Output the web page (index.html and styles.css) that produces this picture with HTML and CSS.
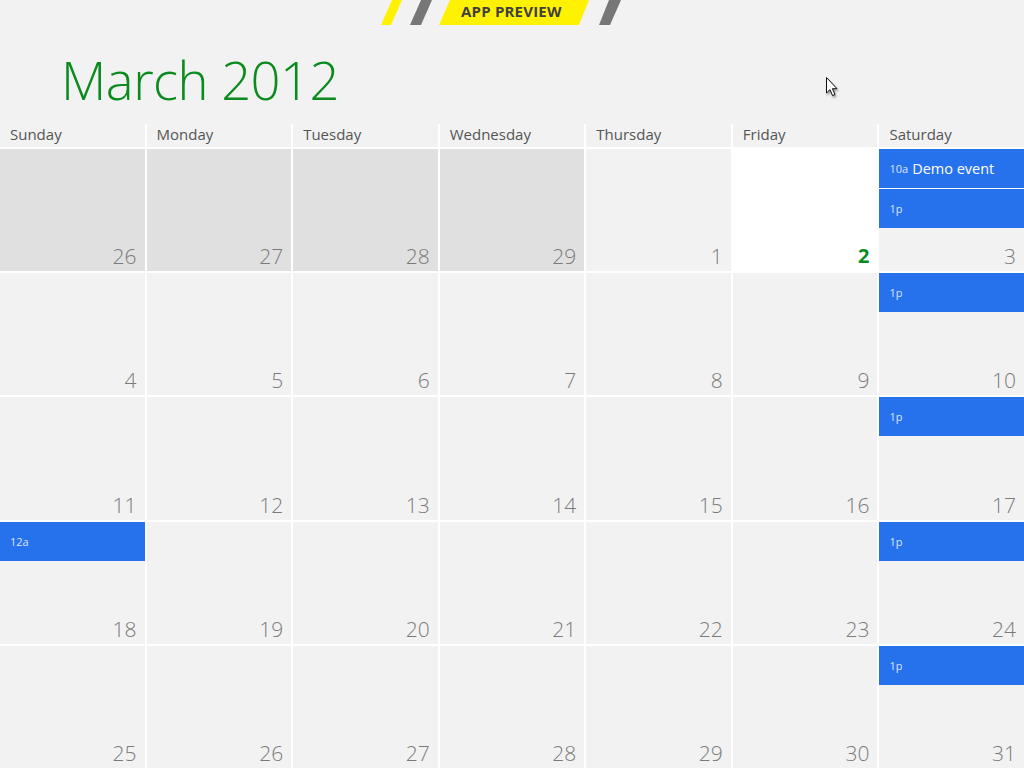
FILE: index.html
```html
<!DOCTYPE html>
<html>
<head>
<meta charset="utf-8">
<link rel="stylesheet" href="styles.css">
</head>
<body>
<header class="top">
  <div class="banner">
    <svg class="banner-shapes" width="260" height="25" viewBox="0 0 260 25">
      <polygon points="1,25 12,0 22,0 11,25" fill="#fff200"/>
      <polygon points="30,25 41,0 52,0 41,25" fill="#777777"/>
      <polygon points="59,25 70,0 209,0 199,25" fill="#fff200"/>
      <polygon points="219,25 229,0 241,0 230,25" fill="#777777"/>
    </svg>
    <span class="banner-text">APP PREVIEW</span>
  </div>
  <h1 class="title">March 2012</h1>
  <svg class="cursor" width="14" height="22" viewBox="0 0 14 22">
    <path d="M1.5,1.5 L1.5,17 L5,13.6 L7.6,19.6 L10,18.6 L7.4,12.7 L12,12.7 Z" fill="#fff" stroke="#111" stroke-width="1" stroke-linejoin="round"/>
  </svg>
</header>
<main class="calendar">
  <div class="dayname">Sunday</div>
  <div class="dayname">Monday</div>
  <div class="dayname">Tuesday</div>
  <div class="dayname">Wednesday</div>
  <div class="dayname">Thursday</div>
  <div class="dayname">Friday</div>
  <div class="dayname">Saturday</div>

  <div class="cell other"><span class="num">26</span></div>
  <div class="cell other"><span class="num">27</span></div>
  <div class="cell other"><span class="num">28</span></div>
  <div class="cell other"><span class="num">29</span></div>
  <div class="cell"><span class="num">1</span></div>
  <div class="cell today"><span class="num">2</span></div>
  <div class="cell">
    <div class="event"><span class="time">10a</span> <span class="name">Demo event</span></div>
    <div class="event"><span class="time small">1p</span></div>
    <span class="num">3</span>
  </div>

  <div class="cell"><span class="num">4</span></div>
  <div class="cell"><span class="num">5</span></div>
  <div class="cell"><span class="num">6</span></div>
  <div class="cell"><span class="num">7</span></div>
  <div class="cell"><span class="num">8</span></div>
  <div class="cell"><span class="num">9</span></div>
  <div class="cell">
    <div class="event"><span class="time small">1p</span></div>
    <span class="num">10</span>
  </div>

  <div class="cell"><span class="num">11</span></div>
  <div class="cell"><span class="num">12</span></div>
  <div class="cell"><span class="num">13</span></div>
  <div class="cell"><span class="num">14</span></div>
  <div class="cell"><span class="num">15</span></div>
  <div class="cell"><span class="num">16</span></div>
  <div class="cell">
    <div class="event"><span class="time small">1p</span></div>
    <span class="num">17</span>
  </div>

  <div class="cell">
    <div class="event"><span class="time small">12a</span></div>
    <span class="num">18</span>
  </div>
  <div class="cell"><span class="num">19</span></div>
  <div class="cell"><span class="num">20</span></div>
  <div class="cell"><span class="num">21</span></div>
  <div class="cell"><span class="num">22</span></div>
  <div class="cell"><span class="num">23</span></div>
  <div class="cell">
    <div class="event"><span class="time small">1p</span></div>
    <span class="num">24</span>
  </div>

  <div class="cell"><span class="num">25</span></div>
  <div class="cell"><span class="num">26</span></div>
  <div class="cell"><span class="num">27</span></div>
  <div class="cell"><span class="num">28</span></div>
  <div class="cell"><span class="num">29</span></div>
  <div class="cell"><span class="num">30</span></div>
  <div class="cell">
    <div class="event"><span class="time small">1p</span></div>
    <span class="num">31</span>
  </div>
</main>
</body>
</html>
```
FILE: styles.css
```css
html, body {
  margin: 0;
  padding: 0;
}
body {
  width: 1024px;
  height: 768px;
  overflow: hidden;
  background: #f2f2f2;
  font-family: "Open Sans", "Noto Sans", sans-serif;
  display: flex;
  flex-direction: column;
}
.top {
  position: relative;
  height: 124px;
  flex: none;
}
.banner {
  position: absolute;
  left: 380px;
  top: 0;
  width: 260px;
  height: 25px;
}
.banner-shapes {
  position: absolute;
  left: 0;
  top: 0;
}
.banner-text {
  position: absolute;
  left: 81px;
  top: -1px;
  line-height: 25px;
  font-size: 15px;
  font-weight: 700;
  color: #3f3f3f;
  letter-spacing: 0.2px;
}
.title {
  margin: 0;
  padding: 45px 0 0 61px;
  font-size: 52.5px;
  font-weight: 300;
  line-height: 70px;
  color: #0b8a1e;
  letter-spacing: -0.5px;
}
.cursor {
  position: absolute;
  left: 825px;
  top: 76px;
  filter: drop-shadow(1px 2px 1px rgba(0,0,0,0.35));
}
.calendar {
  flex: 1;
  background: #ffffff;
  display: grid;
  grid-template-columns: repeat(7, 1fr);
  grid-template-rows: 23px repeat(5, 1fr);
  gap: 2px;
}
.dayname {
  background: #f2f2f2;
  padding-left: 10px;
  font-size: 15px;
  line-height: 21px;
  color: #555555;
}
.cell {
  background: #f2f2f2;
  display: flex;
  flex-direction: column;
  min-height: 0;
  overflow: hidden;
}
.cell.other {
  background: #e0e0e0;
}
.cell.today {
  background: #ffffff;
}
.event {
  height: 39px;
  flex: none;
  background: #2672ec;
  color: #ffffff;
  display: flex;
  align-items: center;
  padding-left: 10px;
  gap: 4px;
}
.event + .event {
  border-top: 1px solid #ffffff;
}
.time {
  font-size: 11px;
  color: rgba(255,255,255,0.85);
}
.name {
  font-size: 14.5px;
  color: #ffffff;
}
.num {
  margin-top: auto;
  align-self: flex-end;
  padding: 0 8px 2px 0;
  font-size: 21px;
  font-weight: 300;
  line-height: 26px;
  color: #7a7a7a;
}
.today .num {
  font-weight: 700;
  font-size: 20px;
  color: #0b8a1e;
}
```
